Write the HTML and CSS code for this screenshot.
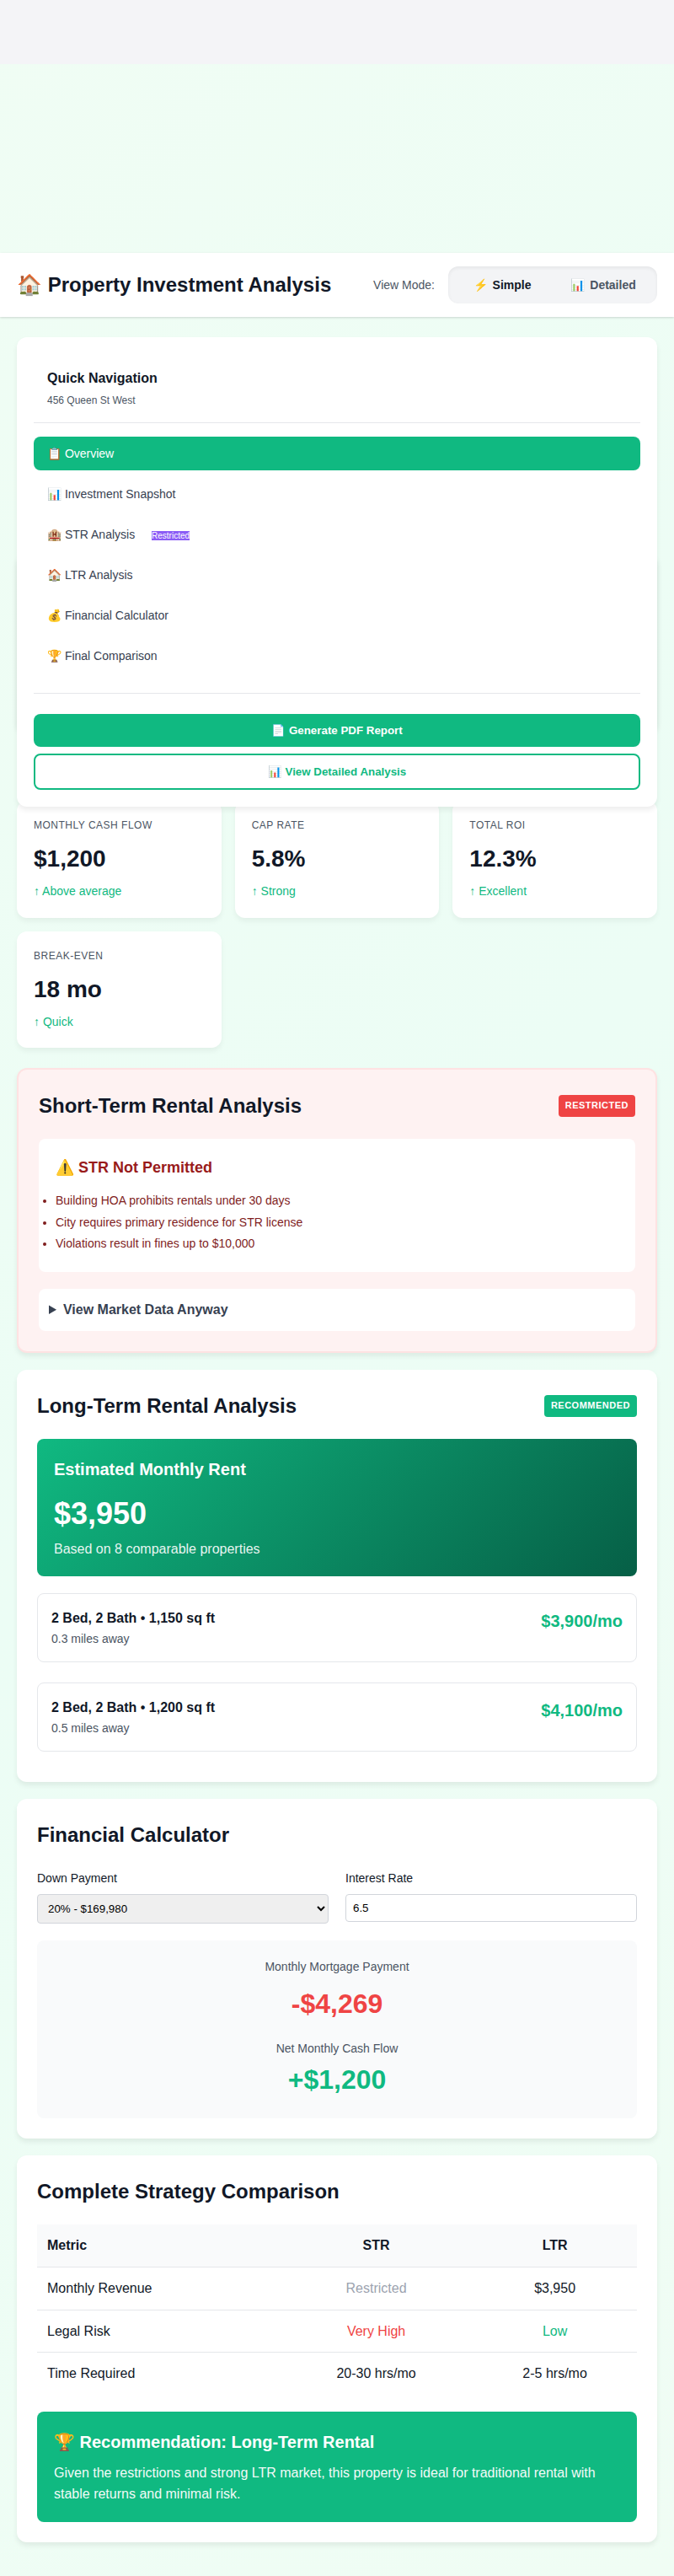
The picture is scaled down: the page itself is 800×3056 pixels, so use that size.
FILE: index.html
```html
<!DOCTYPE html>
<html lang="en">
<head>
<meta charset="utf-8">
<title>Property Investment Analysis</title>
<link rel="stylesheet" href="styles.css">
</head>
<body>
<div class="topbar"></div>
<header class="header">
  <h1 class="header-title">🏠 Property Investment Analysis</h1>
  <div class="view-mode">
    <span class="view-label">View Mode:</span>
    <div class="toggle">
      <button class="toggle-btn toggle-active"><span>⚡</span><span>Simple</span></button>
      <button class="toggle-btn"><span>📊</span><span>Detailed</span></button>
    </div>
  </div>
</header>
<div class="layout">
  <aside class="sidebar">
    <div class="sidebar-head">
      <h3 class="sidebar-title">Quick Navigation</h3>
      <p class="sidebar-sub">456 Queen St West</p>
    </div>
    <nav class="nav">
      <a class="nav-item nav-active">📋 Overview</a>
      <a class="nav-item">📊 Investment Snapshot</a>
      <a class="nav-item">🏨 STR Analysis <span class="nav-badge">Restricted</span></a>
      <a class="nav-item">🏠 LTR Analysis</a>
      <a class="nav-item">💰 Financial Calculator</a>
      <a class="nav-item">🏆 Final Comparison</a>
    </nav>
    <div class="actions">
      <button class="action action-primary">📄 Generate PDF Report</button>
      <button class="action action-outline">📊 View Detailed Analysis</button>
    </div>
  </aside>
  <main class="content">
    <section class="hero"></section>
    <div class="metrics">
      <div class="metric"><div class="metric-label">Monthly Cash Flow</div><div class="metric-value">$1,200</div><div class="metric-change">↑ Above average</div></div>
      <div class="metric"><div class="metric-label">Cap Rate</div><div class="metric-value">5.8%</div><div class="metric-change">↑ Strong</div></div>
      <div class="metric"><div class="metric-label">Total ROI</div><div class="metric-value">12.3%</div><div class="metric-change">↑ Excellent</div></div>
      <div class="metric"><div class="metric-label">Break-Even</div><div class="metric-value">18 mo</div><div class="metric-change">↑ Quick</div></div>
    </div>
    <section class="card card-restricted">
      <div class="card-head"><h2 class="card-title">Short-Term Rental Analysis</h2><span class="badge badge-red">Restricted</span></div>
      <div class="alert">
        <h3 class="alert-title">⚠️ STR Not Permitted</h3>
        <ul class="alert-list">
          <li>Building HOA prohibits rentals under 30 days</li>
          <li>City requires primary residence for STR license</li>
          <li>Violations result in fines up to $10,000</li>
        </ul>
      </div>
      <details class="market"><summary class="market-summary">View Market Data Anyway</summary></details>
    </section>
    <section class="card">
      <div class="card-head"><h2 class="card-title">Long-Term Rental Analysis</h2><span class="badge badge-green">Recommended</span></div>
      <div class="rent">
        <h3 class="rent-title">Estimated Monthly Rent</h3>
        <div class="rent-value">$3,950</div>
        <p class="rent-note">Based on 8 comparable properties</p>
      </div>
      <div class="comps">
        <div class="comp"><div><div class="comp-name">2 Bed, 2 Bath • 1,150 sq ft</div><div class="comp-dist">0.3 miles away</div></div><div class="comp-price">$3,900/mo</div></div>
        <div class="comp"><div><div class="comp-name">2 Bed, 2 Bath • 1,200 sq ft</div><div class="comp-dist">0.5 miles away</div></div><div class="comp-price">$4,100/mo</div></div>
      </div>
    </section>
    <section class="card">
      <div class="card-head"><h2 class="card-title">Financial Calculator</h2></div>
      <div class="fields">
        <label class="field"><span class="field-label">Down Payment</span><select class="field-select"><option>20% - $169,980</option></select></label>
        <label class="field"><span class="field-label">Interest Rate</span><input class="field-input" type="text" value="6.5"></label>
      </div>
      <div class="result">
        <div class="result-label">Monthly Mortgage Payment</div>
        <div class="result-value result-cost">-$4,269</div>
        <div class="result-label">Net Monthly Cash Flow</div>
        <div class="result-value result-gain">+$1,200</div>
      </div>
    </section>
    <section class="card">
      <div class="card-head"><h2 class="card-title">Complete Strategy Comparison</h2></div>
      <table class="table">
        <thead><tr><th>Metric</th><th>STR</th><th>LTR</th></tr></thead>
        <tbody>
          <tr><td>Monthly Revenue</td><td class="muted">Restricted</td><td>$3,950</td></tr>
          <tr><td>Legal Risk</td><td class="bad">Very High</td><td class="good">Low</td></tr>
          <tr><td>Time Required</td><td>20-30 hrs/mo</td><td>2-5 hrs/mo</td></tr>
        </tbody>
      </table>
      <div class="recommend">
        <h3 class="recommend-title">🏆 Recommendation: Long-Term Rental</h3>
        <p class="recommend-text">Given the restrictions and strong LTR market, this property is ideal for traditional rental with stable returns and minimal risk.</p>
      </div>
    </section>
  </main>
</div>
</body>
</html>
```
FILE: styles.css
```css
* { box-sizing: border-box; margin: 0; padding: 0; }
body {
  font-family: "Liberation Sans", Arial, sans-serif;
  font-size: 16px;
  line-height: 1.6;
  color: #111827;
  min-height: 3056px;
  background: linear-gradient(135deg, #f0fdf4 0%, #ecfdf5 50%, #f0fdf4 100%);
}
.topbar { height: 76px; background: #f4f4f7; margin-bottom: 224px; }
.header {
  height: 76px; padding: 0 20px; background: #fff;
  display: flex; align-items: center; justify-content: space-between;
  box-shadow: 0 1px 3px rgba(0,0,0,.1), 0 1px 2px rgba(0,0,0,.06);
}
.header-title { font-size: 24px; line-height: 38.4px; }
.view-mode { display: flex; align-items: center; gap: 16px; }
.view-label { font-size: 14px; color: #4b5563; }
.toggle {
  display: flex; padding: 4px; height: 44px; border-radius: 12px;
  background: #f3f4f6; box-shadow: inset 0 2px 4px rgba(0,0,0,.06);
}
.toggle-btn {
  width: 120px; border: 0; background: none; font: bold 14px "Liberation Sans", Arial, sans-serif;
  color: #4b5563; display: flex; align-items: center; justify-content: center; gap: 6px;
}
.toggle-active { color: #111827; }
.layout { position: relative; padding: 24px 20px 39.8px; }
.sidebar {
  position: absolute; z-index: 2; top: 24px; left: 20px; right: 20px;
  height: 557px; padding: 20px; background: #fff; border-radius: 12px;
  box-shadow: 0 4px 6px rgba(0,0,0,.07);
}
.sidebar-head { padding: 16px; border-bottom: 1px solid #e5e7eb; margin-bottom: 16px; }
.sidebar-title { font-size: 16px; margin-bottom: 4px; }
.sidebar-sub { font-size: 12px; color: #4b5563; }
.nav { display: flex; flex-direction: column; gap: 8px; }
.nav-item {
  height: 40px; padding: 0 16px; border-radius: 8px;
  font-size: 14px; line-height: 40px; color: #374151;
}
.nav-active { background: #10b981; color: #fff; }
.nav-badge { margin-left: 16px; background: #8b5cf6; color: #fff; font-size: 10px; line-height: 1; }
.actions {
  margin-top: 24px; padding-top: 24px; border-top: 1px solid #e5e7eb;
  display: flex; flex-direction: column; gap: 8px;
}
.action { height: 39px; border: 0; border-radius: 8px; font: bold 13.333px "Liberation Sans", Arial, sans-serif; }
.action-primary { background: #10b981; color: #fff; }
.action-outline { height: 43px; background: #fff; color: #10b981; border: 2px solid #10b981; }
.content { padding-top: 256px; }
.hero {
  height: 212px; margin-bottom: 82.2px; background: #fff; border-radius: 12px;
  box-shadow: 0 4px 6px rgba(0,0,0,.1);
}
.metrics { display: grid; grid-template-columns: repeat(3, 1fr); gap: 16px; margin-bottom: 24px; }
.metric { padding: 20px; background: #fff; border-radius: 12px; box-shadow: 0 4px 6px rgba(0,0,0,.05); }
.metric-label {
  font-size: 12px; letter-spacing: .5px; text-transform: uppercase;
  color: #4b5563; margin-bottom: 8px;
}
.metric-value { font-size: 28px; font-weight: bold; margin-bottom: 4px; }
.metric-change { font-size: 14px; color: #10b981; }
.card {
  padding: 24px; margin-bottom: 20px; background: #fff; border-radius: 12px;
  box-shadow: 0 4px 6px rgba(0,0,0,.07);
}
.card:last-child { margin-bottom: 0; }
.card-restricted { background: #fef2f2; border: 2px solid #fee2e2; }
.card-head { display: flex; align-items: center; justify-content: space-between; margin-bottom: 20px; }
.card-title { font-size: 24px; line-height: 38.4px; }
.badge {
  padding: 4px 8px; border-radius: 4px; color: #fff;
  font-size: 11px; font-weight: bold; letter-spacing: .5px; text-transform: uppercase;
}
.badge-red { background: #ef4444; }
.badge-green { background: #10b981; }
.alert { padding: 20px; margin-bottom: 20px; background: #fff; border-radius: 8px; }
.alert-title { font-size: 18px; color: #991b1b; margin-bottom: 12px; }
.alert-list { font-size: 14px; line-height: 25.6px; color: #7f1d1d; }
.market { padding: 12px; background: #fff; border-radius: 8px; }
.market-summary { font-weight: bold; color: #374151; }
.rent {
  padding: 20px; margin-bottom: 20px; border-radius: 8px; color: #fff;
  background: linear-gradient(135deg, #10b981, #065f46);
}
.rent-title { font-size: 20px; margin-bottom: 8px; }
.rent-value { font-size: 36px; font-weight: bold; }
.rent-note { opacity: .9; }
.comp {
  display: flex; justify-content: space-between; height: 82px;
  padding: 16px; margin-bottom: 24px; border: 1px solid #e5e7eb; border-radius: 8px;
}
.comp:last-child { margin-bottom: 12px; }
.comp-name { font-weight: bold; }
.comp-dist { font-size: 14px; color: #4b5563; }
.comp-price { font-size: 20px; font-weight: bold; color: #10b981; }
.fields { display: grid; grid-template-columns: 1fr 1fr; gap: 20px; margin-bottom: 20px; }
.field { display: flex; flex-direction: column; gap: 8px; }
.field-label { font-size: 14px; }
.field-select, .field-input {
  width: 100%; font: 13.333px "Liberation Sans", Arial, sans-serif;
  border: 1px solid #d1d5db; border-radius: 4px;
}
.field-select { height: 35px; padding: 8px; background-color: #efefef; color: #000; }
.field-input { height: 33px; padding: 8px; }
.result { padding: 20px; text-align: center; background: #f9fafb; border-radius: 8px; }
.result-label { font-size: 14px; color: #4b5563; }
.result-value { font-size: 32px; font-weight: bold; }
.result-cost { color: #ef4444; margin: 8px 0 16px; }
.result-gain { color: #10b981; }
.table { width: 100%; border-collapse: collapse; margin-bottom: 20px; }
.table th, .table td { padding: 12px; text-align: center; }
.table th:first-child, .table td:first-child { text-align: left; }
.table tr { border-bottom: 1px solid #e5e7eb; }
.table tbody tr:last-child { border-bottom: 0; }
.table thead { background: #f9fafb; }
.table .muted { color: #9ca3af; }
.table .bad { color: #ef4444; }
.table .good { color: #10b981; }
.recommend { padding: 20px; border-radius: 8px; background: #10b981; color: #fff; }
.recommend-title { font-size: 20px; margin-bottom: 8px; }
.recommend-text { opacity: .95; }
```
